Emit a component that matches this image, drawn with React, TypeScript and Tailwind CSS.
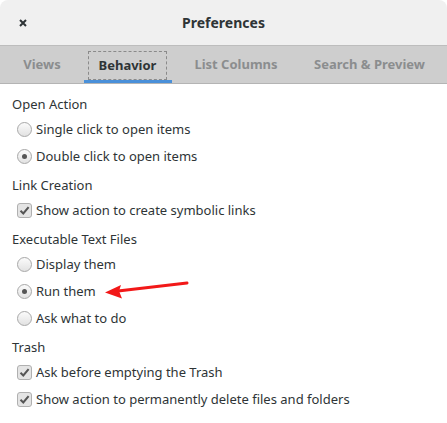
import React from 'react';

type Option = { label: string; checked?: boolean };

const Radio: React.FC<Option> = ({ label, checked }) => (
  <div className="flex h-[27px] items-center pl-[17px]">
    <span className="flex h-[15px] w-[15px] items-center justify-center rounded-full border border-[#a8a8a8] bg-gradient-to-b from-[#fbfbfb] to-[#e2e2e2]">
      {checked && <span className="h-[5px] w-[5px] rounded-full bg-[#555]" />}
    </span>
    <span className="ml-[4px]">{label}</span>
  </div>
);

const Check: React.FC<Option> = ({ label }) => (
  <div className="flex h-[27px] items-center pl-[17px]">
    <span className="flex h-[15px] w-[15px] items-center justify-center rounded-[3px] border border-[#b0b0b0] bg-[#e4e4e4]">
      <svg width="11" height="11" viewBox="0 0 11 11">
        <path d="M1.5 5.8 L4.3 8.5 L9.6 2.2" fill="none" stroke="#555" strokeWidth="2" />
      </svg>
    </span>
    <span className="ml-[4px]">{label}</span>
  </div>
);

const Section: React.FC<{ title: string; children: React.ReactNode }> = ({ title, children }) => (
  <div className="mb-[4px]">
    <div className="flex h-[23px] items-center pl-[12px]">{title}</div>
    {children}
  </div>
);

const tabs = [
  { label: 'Views', w: 'w-[84px]' },
  { label: 'Behavior', w: 'w-[88px]' },
  { label: 'List Columns', w: 'w-[128px]' },
  { label: 'Search & Preview', w: 'w-[139px]' },
];

export default function App() {
  return (
    <div className="relative h-[423px] w-[447px] overflow-hidden bg-white font-['Noto_Sans',sans-serif] text-[13px] text-[#2e3436]">
      {/* Title bar */}
      <div className="relative flex h-[46px] items-center justify-center rounded-t-[8px] border-b border-[#bdbdbd] bg-[#f0f0f0]">
        <svg className="absolute left-[19px] top-[19px]" width="8" height="8" viewBox="0 0 8 8">
          <path d="M1 1 L7 7 M7 1 L1 7" stroke="#2e3436" strokeWidth="2" />
        </svg>
        <span className="text-[14px] font-bold">Preferences</span>
      </div>

      {/* Tabs */}
      <div className="flex h-[38px] border-b border-[#b4b4b4] bg-[#cecece] font-bold">
        {tabs.map((t, i) =>
          i === 1 ? (
            <div key={t.label} className={`relative flex ${t.w} items-start pl-[4px] pr-[5px] pt-[5px] text-[#2e3436]`}>
              <span className="flex h-[29px] flex-1 items-center justify-center border border-dashed border-[#8a8a8a]">
                {t.label}
              </span>
              <span className="absolute bottom-0 left-0 right-0 h-[3px] bg-[#4a90d9]" />
            </div>
          ) : (
            <div key={t.label} className={`flex ${t.w} items-center justify-center text-[#8b8d8e]`}>
              {t.label}
            </div>
          )
        )}
      </div>

      {/* Content */}
      <div className="pt-[9px]">
        <Section title="Open Action">
          <Radio label="Single click to open items" />
          <Radio label="Double click to open items" checked />
        </Section>
        <Section title="Link Creation">
          <Check label="Show action to create symbolic links" />
        </Section>
        <Section title="Executable Text Files">
          <Radio label="Display them" />
          <Radio label="Run them" checked />
          <Radio label="Ask what to do" />
        </Section>
        <Section title="Trash">
          <Check label="Ask before emptying the Trash" />
          <Check label="Show action to permanently delete files and folders" />
        </Section>
      </div>

      {/* Annotation arrow */}
      <svg className="absolute left-0 top-0" width="447" height="423" viewBox="0 0 447 423">
        <line x1="187" y1="283" x2="118" y2="291" stroke="#f21818" strokeWidth="3" strokeLinecap="round" />
        <path d="M105 292.5 L121 285 L119 291 L122 298.5 Z" fill="#f21818" />
      </svg>
    </div>
  );
}
